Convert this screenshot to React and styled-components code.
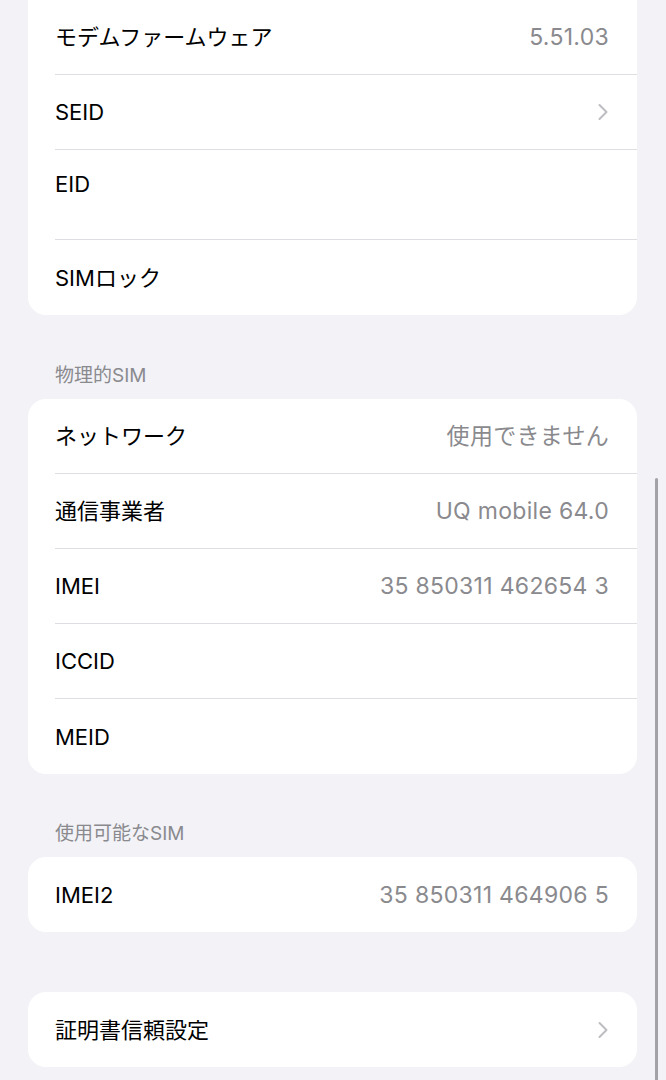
import { useLayoutEffect, useRef } from 'react';
import styled, { createGlobalStyle } from 'styled-components';

const GlobalStyle = createGlobalStyle`
  html, body {
    margin: 0;
    padding: 0;
    background: #f2f2f7;
  }
  * {
    box-sizing: border-box;
  }
`;

const Frame = styled.div`
  position: relative;
  height: 100vh;
  overflow: hidden;
  background: #f2f2f7;
  font-family: Inter, "Noto Sans CJK JP", sans-serif;
  -webkit-font-smoothing: antialiased;
`;

const Screen = styled.div`
  height: 100%;
  overflow: hidden;
`;

const Content = styled.div`
  padding: 30px 29px 60px 28px;
`;

const SectionHeader = styled.div`
  margin: ${p => p.$top}px 27px 12px;
  font-size: 19px;
  line-height: 22px;
  color: #8a8a8e;
`;

const Card = styled.div`
  background: #fff;
  border-radius: 18px;
  overflow: hidden;
  margin-top: ${p => p.$top || 0}px;
`;

const RowBody = styled.div`
  display: flex;
  align-items: ${p => (p.$tall ? 'flex-start' : 'center')};
  justify-content: space-between;
  height: ${p => (p.$tall ? 90 : 75)}px;
  padding: ${p => (p.$tall ? '21px' : '0')} 28px 0 0;
  border-bottom: 1px solid #dedee2;
`;

const Row = styled.div`
  padding-left: 27px;
  &:last-child ${RowBody} {
    border-bottom: none;
  }
`;

const Label = styled.span`
  font-size: 22px;
  line-height: 26px;
  color: #000;
`;

const Value = styled.span`
  font-size: 23px;
  line-height: 26px;
  letter-spacing: 0.3px;
  color: #8a8a8e;
`;

const Chevron = styled.svg`
  width: 12px;
  height: 18px;
  display: block;
`;

const ScrollIndicator = styled.div`
  position: absolute;
  right: 8px;
  top: 478px;
  bottom: -6px;
  width: 3px;
  border-radius: 2px;
  background: #a3a3a7;
`;

function ChevronIcon() {
  return (
    <Chevron viewBox="0 0 12 18">
      <polyline
        points="2.5,2 9.5,9 2.5,16"
        fill="none"
        stroke="#bdbdc1"
        strokeWidth="2"
        strokeLinecap="round"
        strokeLinejoin="round"
      />
    </Chevron>
  );
}

function SettingRow({ label, value, chevron, tall }) {
  return (
    <Row>
      <RowBody $tall={tall}>
        <Label>{label}</Label>
        {value && <Value>{value}</Value>}
        {chevron && <ChevronIcon />}
      </RowBody>
    </Row>
  );
}

export default function App() {
  const screenRef = useRef(null);

  // the page is shown scrolled down past the Bluetooth row
  useLayoutEffect(() => {
    if (screenRef.current) screenRef.current.scrollTop = 105;
  }, []);

  return (
    <Frame>
      <GlobalStyle />
      <Screen ref={screenRef}>
        <Content>
          <Card>
            <SettingRow label="Bluetooth" />
            <SettingRow label="モデムファームウェア" value="5.51.03" />
            <SettingRow label="SEID" chevron />
            <SettingRow label="EID" tall />
            <SettingRow label="SIMロック" />
          </Card>

          <SectionHeader $top={50}>物理的SIM</SectionHeader>
          <Card>
            <SettingRow label="ネットワーク" value="使用できません" />
            <SettingRow label="通信事業者" value="UQ mobile 64.0" />
            <SettingRow label="IMEI" value="35 850311 462654 3" />
            <SettingRow label="ICCID" />
            <SettingRow label="MEID" />
          </Card>

          <SectionHeader $top={49}>使用可能なSIM</SectionHeader>
          <Card>
            <SettingRow label="IMEI2" value="35 850311 464906 5" />
          </Card>

          <Card $top={60}>
            <SettingRow label="証明書信頼設定" chevron />
          </Card>
        </Content>
      </Screen>
      <ScrollIndicator />
    </Frame>
  );
}
